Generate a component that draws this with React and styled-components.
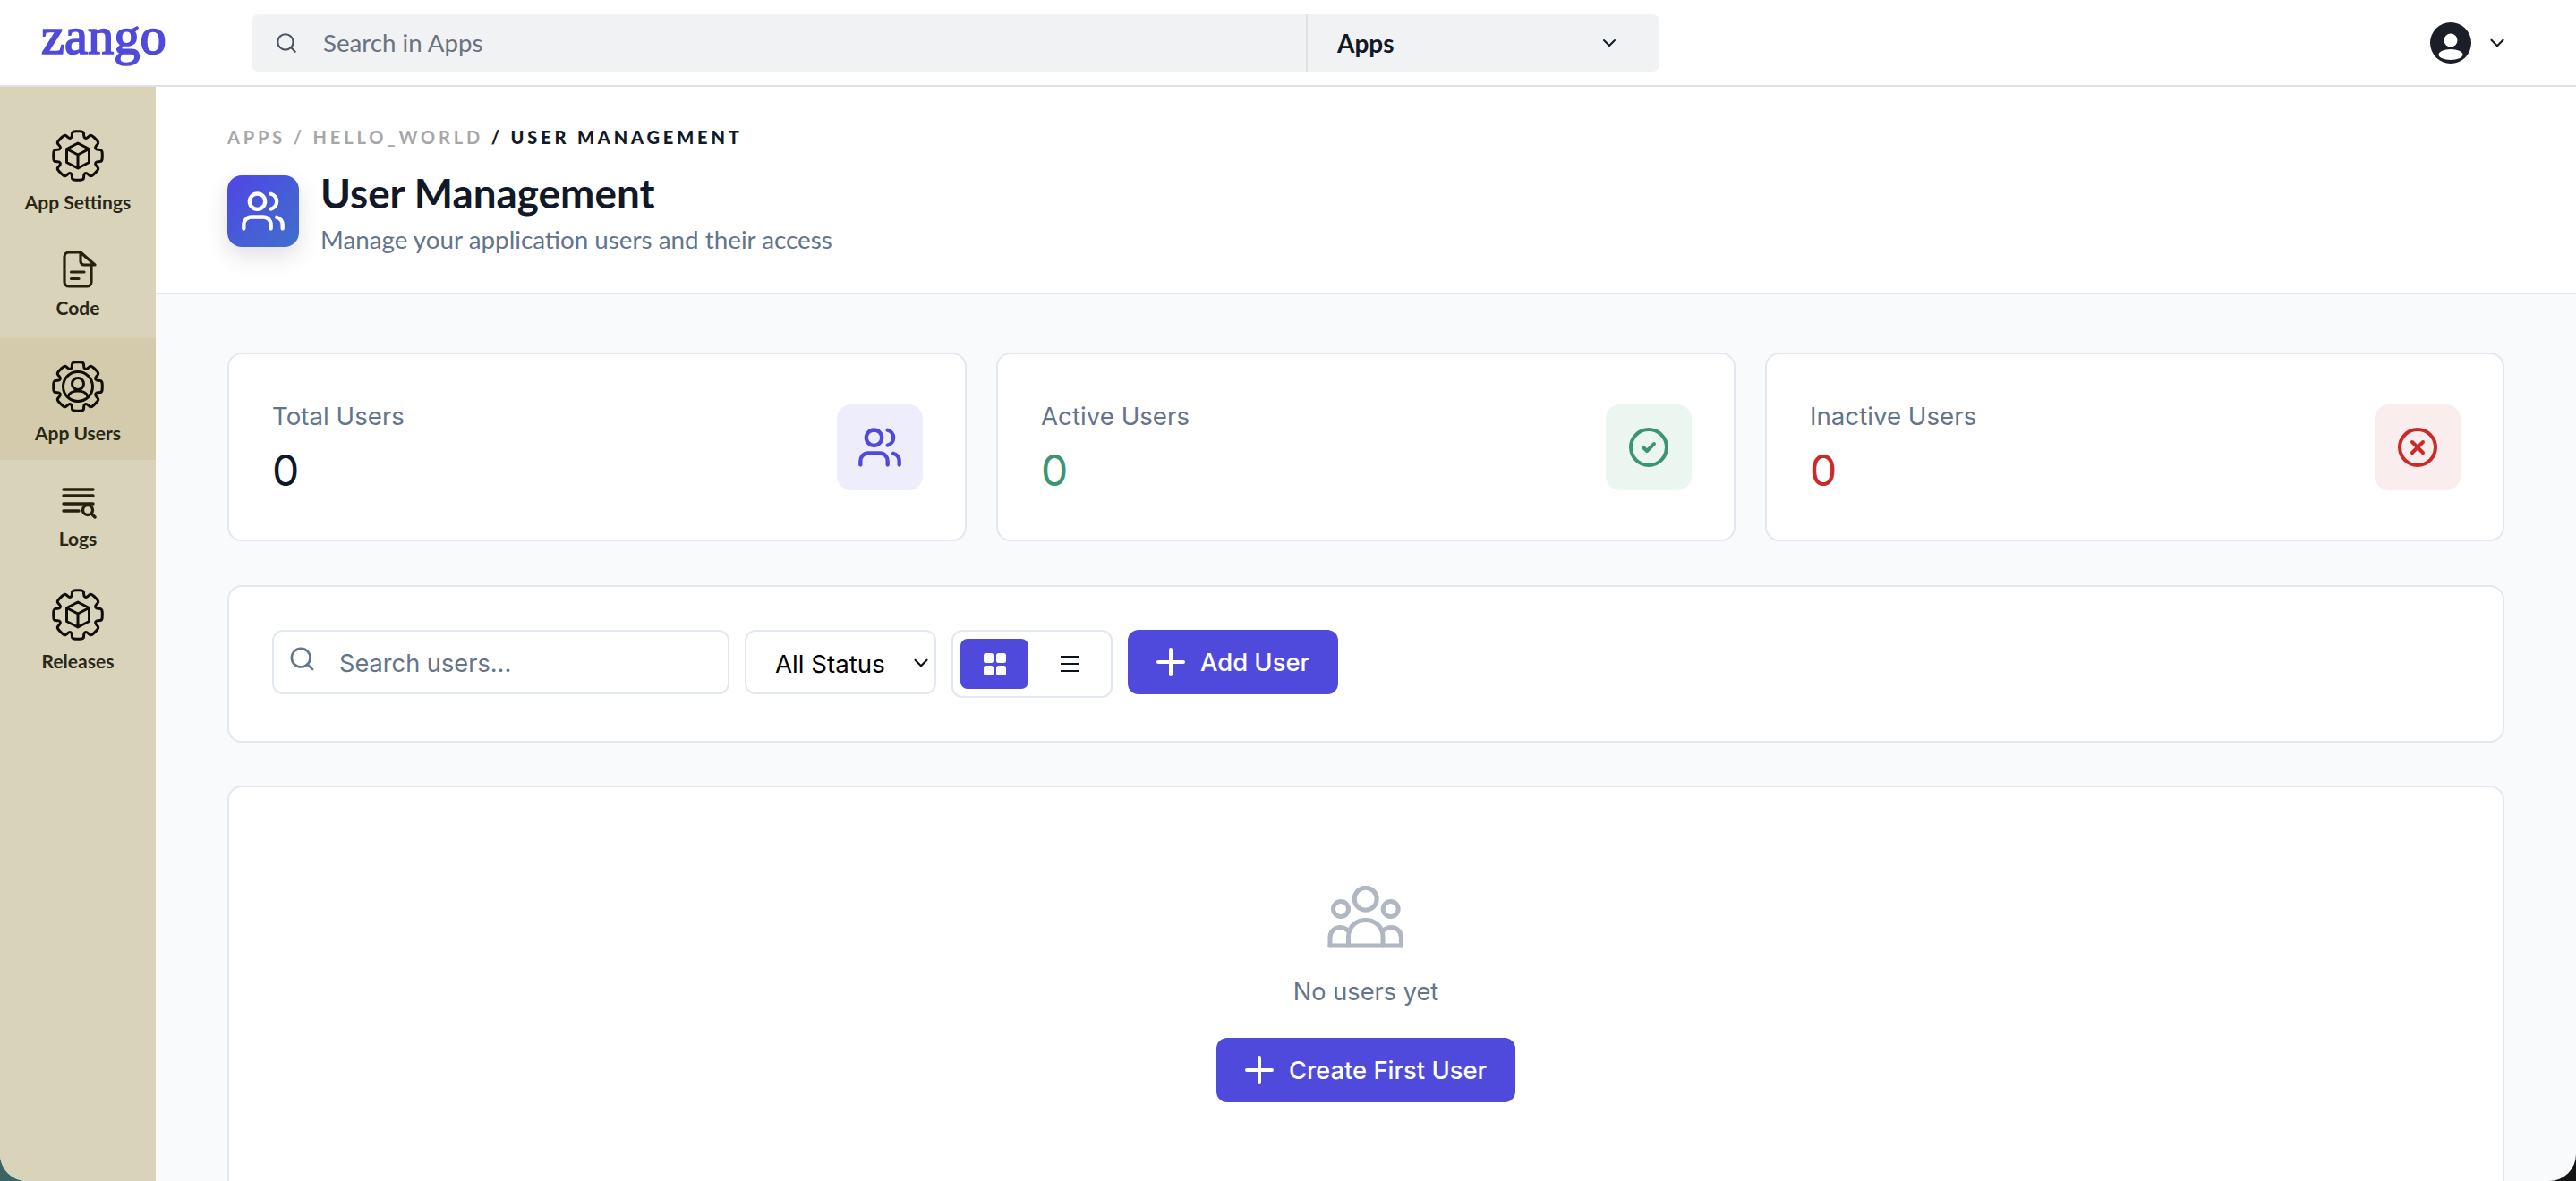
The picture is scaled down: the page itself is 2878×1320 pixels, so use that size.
import React from "react";
import styled, { createGlobalStyle } from "styled-components";
import { Search, ChevronDown, Users, CircleCheck, CircleX, Plus } from "lucide-react";

const GlobalStyle = createGlobalStyle`
  html, body {
    margin: 0;
    height: 100%;
    overflow: hidden;
    background: linear-gradient(90deg, #3a6464 0 3%, #141414 97%);
  }
  * { box-sizing: border-box; }
`;

const Frame = styled.div`
  height: 100vh;
  display: grid;
  grid-template-rows: 97px 1fr;
  border-radius: 0 0 30px 30px;
  overflow: hidden;
  background: #f8fafc;
  font-family: "Lato", sans-serif;
`;

const TopBar = styled.header`
  display: flex;
  align-items: center;
  background: #fff;
  border-bottom: 2px solid #dfe2e6;
  padding: 0 75px 0 46px;
`;

const Logo = styled.div`
  width: 235px;
  margin-top: -13px;
  font-family: "Liberation Serif", serif;
  font-weight: 400;
  font-size: 58.5px;
  line-height: 1;
  color: #504adc;
  -webkit-text-stroke: 1.7px #504adc;
`;

const GlobalSearch = styled.div`
  width: 1573px;
  height: 64px;
  display: flex;
  background: #f1f2f4;
  border-radius: 8px;
`;

const GlobalSearchField = styled.div`
  flex: 1;
  display: flex;
  align-items: center;
  gap: 28px;
  padding-left: 26px;
  color: #4b5563;
  font-size: 27.7px;
  span { color: #6b7280; }
`;

const AppsPicker = styled.div`
  width: 395px;
  display: flex;
  align-items: center;
  justify-content: space-between;
  padding: 0 44px 0 33px;
  border-left: 2px solid #dfe1e4;
  font-size: 28px;
  font-weight: 700;
  color: #111827;
`;

const Account = styled.div`
  margin-left: auto;
  display: flex;
  align-items: center;
  gap: 16px;
  color: #1b1e27;
`;

const Body = styled.div`
  display: grid;
  grid-template-columns: 174px 1fr;
  min-height: 0;
`;

const Sidebar = styled.nav`
  background: #d9d3ba;
  padding-top: 23px;
`;

const NavItem = styled.div`
  height: ${(p) => p.$height}px;
  padding-top: 24px;
  display: flex;
  flex-direction: column;
  align-items: center;
  background: ${(p) => (p.$active ? "#d3cbab" : "transparent")};
`;

const NavIcon = styled.svg`
  display: block;
  fill: none;
  stroke: ${(p) => p.$stroke || "#0f0e08"};
  stroke-linecap: round;
  stroke-linejoin: round;
`;

const NavLabel = styled.div`
  margin-top: 10px;
  font-size: 21px;
  line-height: 24px;
  font-weight: 700;
  color: #2b2716;
`;

const Main = styled.main`
  min-width: 0;
  overflow: hidden;
`;

const PageHead = styled.section`
  height: 232px;
  background: #fff;
  border-bottom: 2px solid #e2e8f0;
  padding: 43px 80px 0;
`;

const Crumbs = styled.div`
  font-size: 20px;
  line-height: 26px;
  font-weight: 700;
  letter-spacing: 3.85px;
  color: #a6a6a6;
  b { color: #111827; font-weight: 900; }
`;

const HeadRow = styled.div`
  margin-top: 30px;
  display: flex;
  gap: 24px;
`;

const HeadTile = styled.div`
  width: 80px;
  height: 80px;
  display: flex;
  align-items: center;
  justify-content: center;
  border-radius: 16px;
  color: #fff;
  background: linear-gradient(135deg, #4f46e5, #3f70cb);
  box-shadow: 0 10px 24px rgba(60, 60, 90, 0.16);
`;

const Title = styled.h1`
  margin: -8px 0 0;
  font-size: 45.8px;
  line-height: 56px;
  font-weight: 700;
  color: #111827;
`;

const Subtitle = styled.p`
  margin: 7px 0 0;
  font-size: 27.8px;
  line-height: 34px;
  color: #64748b;
`;

const Content = styled.div`
  padding: 65px 80px 0;
  display: flex;
  flex-direction: column;
  gap: 48px;
  font-family: "Inter", sans-serif;
`;

const StatsGrid = styled.div`
  display: grid;
  grid-template-columns: repeat(3, 1fr);
  gap: 33px;
  margin-bottom: 1px;
`;

const Card = styled.div`
  background: #fff;
  border: 2px solid #e2e8f0;
  border-radius: 16px;
`;

const StatCard = styled(Card)`
  height: 211px;
  padding: 48px 47px 48px 48px;
  display: flex;
  align-items: center;
  justify-content: space-between;
`;

const StatLabel = styled.div`
  font-size: 27.7px;
  line-height: 42px;
  color: #64748b;
`;

const StatValue = styled.div`
  margin-top: 9px;
  font-size: 48px;
  line-height: 61px;
  color: ${(p) => p.$color};
`;

const StatTile = styled.div`
  width: 96px;
  height: 96px;
  display: flex;
  align-items: center;
  justify-content: center;
  border-radius: 16px;
  color: ${(p) => p.$color};
  background: ${(p) => p.$tint};
`;

const Toolbar = styled(Card)`
  padding: 48px;
  display: flex;
  align-items: flex-start;
  gap: 17px;
`;

const SearchBox = styled.div`
  position: relative;
  width: 511px;
  color: #64748b;
  svg { position: absolute; left: 18px; top: 17px; }
`;

const SearchInput = styled.input`
  width: 100%;
  height: 72px;
  padding: 3px 20px 0 73px;
  border: 2px solid #e2e8f0;
  border-radius: 12px;
  background: #fff;
  font: 27.2px "Inter", sans-serif;
  color: #0f172a;
  &::placeholder { color: #64748b; opacity: 1; }
`;

const SelectBox = styled.div`
  position: relative;
  width: 214px;
  color: #111;
  svg { position: absolute; right: 4px; top: 24px; pointer-events: none; }
`;

const StatusSelect = styled.select`
  width: 100%;
  height: 72px;
  padding: 3px 0 0 32px;
  appearance: none;
  border: 2px solid #e2e8f0;
  border-radius: 12px;
  background: #fff;
  font: 27.7px "Inter", sans-serif;
  color: #000;
`;

const ViewToggle = styled.div`
  display: flex;
  gap: 8px;
  padding: 8px;
  border: 2px solid #e2e8f0;
  border-radius: 12px;
  background: #fff;
`;

const ViewButton = styled.button`
  width: 76px;
  height: 56px;
  padding: 0;
  display: flex;
  align-items: center;
  justify-content: center;
  border: 0;
  border-radius: 8px;
  background: ${(p) => (p.$active ? "#504adc" : "transparent")};
`;

const PrimaryButton = styled.button`
  height: 72px;
  display: inline-flex;
  align-items: center;
  gap: 9px;
  padding: 0 32px 0 24px;
  border: 0;
  border-radius: 12px;
  background: #504adc;
  color: #fff;
  font: 500 27.4px "Inter", sans-serif;
`;

const EmptyCard = styled(Card)`
  padding: 110px 0 120px;
  display: flex;
  flex-direction: column;
  align-items: center;
`;

const EmptyText = styled.p`
  margin: 28px 0 30px;
  font-size: 27.2px;
  line-height: 42px;
  color: #64748b;
`;

// gear outline shared by the sidebar icons, corners rounded off a polygon
const gearPath = (() => {
  const pts = [];
  for (let i = 0; i < 8; i++) {
    const a = (i * Math.PI) / 4 - Math.PI / 2;
    [[21.5, -0.32], [28, -0.23], [28, 0.23], [21.5, 0.32]].forEach(([r, d]) => {
      pts.push([30 + r * Math.cos(a + d), 30 + r * Math.sin(a + d)]);
    });
  }
  const n = pts.length;
  const mid = (p, q, t) => [p[0] + (q[0] - p[0]) * t, p[1] + (q[1] - p[1]) * t];
  let d = "";
  pts.forEach((p, i) => {
    const a = mid(p, pts[(i + n - 1) % n], 0.35);
    const b = mid(p, pts[(i + 1) % n], 0.35);
    d += `${i ? "L" : "M"}${a[0].toFixed(2)} ${a[1].toFixed(2)}Q${p[0].toFixed(2)} ${p[1].toFixed(2)} ${b[0].toFixed(2)} ${b[1].toFixed(2)}`;
  });
  return d + "Z";
})();

const CubeGear = () => (
  <NavIcon width="60" height="60" viewBox="0 0 60 60" strokeWidth="3">
    <path d={gearPath} />
    <path d="M30 16l12.5 6.5v15L30 44l-12.5-6.5v-15zM17.5 22.5L30 29l12.5-6.5M30 29v15" />
  </NavIcon>
);

const UserGear = () => (
  <NavIcon width="60" height="60" viewBox="0 0 60 60" strokeWidth="3">
    <path d={gearPath} />
    <circle cx="30" cy="30" r="16.5" />
    <circle cx="30" cy="27" r="6.5" />
    <path d="M19 41.5C20 37 25 35 30 35s10 2 11 6.5" />
  </NavIcon>
);

const CodeIcon = () => (
  <NavIcon width="42" height="42" viewBox="0 0 42 42" strokeWidth="3.2" $stroke="#26210f">
    <path d="M24 2H11a5 5 0 0 0-5 5v28a5 5 0 0 0 5 5h20a5 5 0 0 0 5-5V16" />
    <path d="M24 2v10a4 4 0 0 0 4 4h12L24 2z" />
    <path d="M13.5 24H28M13.5 31.5H22" />
  </NavIcon>
);

const LogsIcon = () => (
  <NavIcon width="42" height="42" viewBox="0 0 42 42" strokeWidth="3.4" $stroke="#26210f">
    <path d="M5 9h33M5 16h33M5 25h33M5 33h17" />
    <circle cx="32" cy="32" r="5.5" />
    <path d="M36 36l4 4" />
  </NavIcon>
);

const GridGlyph = () => (
  <svg width="25" height="25" viewBox="0 0 25 25" fill="#f8fafc">
    <rect width="11" height="11" rx="2.5" />
    <rect x="14" width="11" height="11" rx="2.5" />
    <rect y="14" width="11" height="11" rx="2.5" />
    <rect x="14" y="14" width="11" height="11" rx="2.5" />
  </svg>
);

const ListGlyph = () => (
  <svg width="20" height="18" viewBox="0 0 20 18" stroke="#0b1120" strokeWidth="2">
    <path d="M0 1h20M0 9h20M0 17h20" />
  </svg>
);

const AvatarGlyph = () => (
  <svg width="46" height="46" viewBox="0 0 46 46">
    <circle cx="23" cy="23" r="23" fill="currentColor" />
    <circle cx="23" cy="20" r="7.5" fill="#fff" />
    <ellipse cx="23" cy="36" rx="13.5" ry="6" fill="#fff" />
  </svg>
);

const EmptyGlyph = () => (
  <svg width="86" height="70" viewBox="0 0 86 70" fill="none" stroke="#b0b7c3" strokeWidth="5" strokeLinecap="round" strokeLinejoin="round">
    <circle cx="42.7" cy="14.7" r="12.5" />
    <circle cx="15" cy="26" r="8.5" />
    <circle cx="70.7" cy="26" r="8.5" />
    <path d="M23.5 67V57c0-12 9.5-18.5 19.2-18.5S62 45 62 57v10" />
    <path d="M3 67v-9c0-7 5-11.5 11-11.5 3 0 6 1 9 3.5" />
    <path d="M82.4 67v-9c0-7-5-11.5-11-11.5-3 0-6 1-9 3.5" />
    <path d="M3 67h79.4" />
  </svg>
);

const navItems = [
  { label: "App Settings", icon: <CubeGear />, height: 136 },
  { label: "Code", icon: <CodeIcon />, height: 122 },
  { label: "App Users", icon: <UserGear />, height: 136, active: true },
  { label: "Logs", icon: <LogsIcon />, height: 119 },
  { label: "Releases", icon: <CubeGear />, height: 136 },
];

const stats = [
  { label: "Total Users", color: "#0f172a", iconColor: "#504adc", tint: "#eeedfb", Icon: Users, size: 52 },
  { label: "Active Users", color: "#3d9470", iconColor: "#3d9470", tint: "#ecf6f1", Icon: CircleCheck, size: 48 },
  { label: "Inactive Users", color: "#c92a2a", iconColor: "#c92a2a", tint: "#faeded", Icon: CircleX, size: 48 },
];

export default function App() {
  return (
    <Frame>
      <GlobalStyle />
      <TopBar>
        <Logo>zango</Logo>
        <GlobalSearch>
          <GlobalSearchField>
            <Search size={26} />
            <span>Search in Apps</span>
          </GlobalSearchField>
          <AppsPicker>
            Apps
            <ChevronDown size={24} />
          </AppsPicker>
        </GlobalSearch>
        <Account>
          <AvatarGlyph />
          <ChevronDown size={26} />
        </Account>
      </TopBar>
      <Body>
        <Sidebar>
          {navItems.map((item) => (
            <NavItem key={item.label} $height={item.height} $active={item.active}>
              {item.icon}
              <NavLabel>{item.label}</NavLabel>
            </NavItem>
          ))}
        </Sidebar>
        <Main>
          <PageHead>
            <Crumbs>
              APPS / HELLO_WORLD <b>/ USER MANAGEMENT</b>
            </Crumbs>
            <HeadRow>
              <HeadTile>
                <Users size={52} />
              </HeadTile>
              <div>
                <Title>User Management</Title>
                <Subtitle>Manage your application users and their access</Subtitle>
              </div>
            </HeadRow>
          </PageHead>
          <Content>
            <StatsGrid>
              {stats.map(({ label, color, iconColor, tint, Icon, size }) => (
                <StatCard key={label}>
                  <div>
                    <StatLabel>{label}</StatLabel>
                    <StatValue $color={color}>0</StatValue>
                  </div>
                  <StatTile $color={iconColor} $tint={tint}>
                    <Icon size={size} />
                  </StatTile>
                </StatCard>
              ))}
            </StatsGrid>
            <Toolbar>
              <SearchBox>
                <Search size={31} />
                <SearchInput placeholder="Search users..." />
              </SearchBox>
              <SelectBox>
                <StatusSelect defaultValue="all">
                  <option value="all">All Status</option>
                  <option value="active">Active</option>
                  <option value="inactive">Inactive</option>
                </StatusSelect>
                <ChevronDown size={26} />
              </SelectBox>
              <ViewToggle>
                <ViewButton $active>
                  <GridGlyph />
                </ViewButton>
                <ViewButton>
                  <ListGlyph />
                </ViewButton>
              </ViewToggle>
              <PrimaryButton>
                <Plus size={48} />
                Add User
              </PrimaryButton>
            </Toolbar>
            <EmptyCard>
              <EmptyGlyph />
              <EmptyText>No users yet</EmptyText>
              <PrimaryButton>
                <Plus size={48} />
                Create First User
              </PrimaryButton>
            </EmptyCard>
          </Content>
        </Main>
      </Body>
    </Frame>
  );
}
